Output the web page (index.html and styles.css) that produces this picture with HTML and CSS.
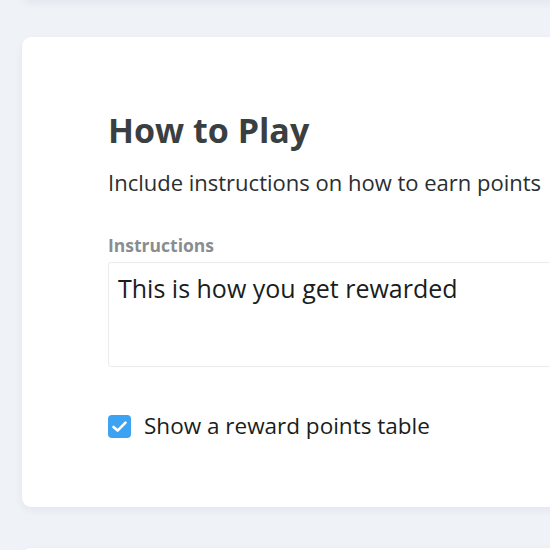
FILE: index.html
```html
<!DOCTYPE html>
<html>
<head>
<meta charset="utf-8">
<link rel="stylesheet" href="styles.css">
</head>
<body>
<div class="page">
  <div class="card card-prev"></div>
  <section class="card">
    <h1 class="title">How to Play</h1>
    <p class="subtitle">Include instructions on how to earn points</p>
    <label class="field-label">Instructions</label>
    <div class="textarea">This is how you get rewarded</div>
    <div class="check-row">
      <span class="checkbox">
        <svg width="17" height="17" viewBox="0 0 17 17"><path d="M2.5 9 L6.6 12.6 L14.5 4.6" fill="none" stroke="#fff" stroke-width="2.6" stroke-linecap="round" stroke-linejoin="round"/></svg>
      </span>
      <span class="check-label">Show a reward points table</span>
    </div>
  </section>
  <div class="card card-next"></div>
</div>
</body>
</html>
```
FILE: styles.css
```css
html, body {
  margin: 0;
  padding: 0;
  background: #eff2f7;
  overflow: hidden;
  height: 550px;
}
body {
  font-family: "Open Sans", "Noto Sans", sans-serif;
  color: #1f2326;
}
.page {
  display: flex;
  flex-direction: column;
  gap: 37px;
  padding-left: 22px;
  width: 528px;
  overflow: hidden;
}
.card {
  background: #fff;
  border-radius: 9px 0 0 9px;
  box-shadow: 0 3px 8px rgba(30, 40, 60, 0.06);
  box-sizing: border-box;
  width: 560px;
  flex-shrink: 0;
}
.card-prev {
  height: 100px;
  margin-top: -100px;
}
.card-next {
  height: 100px;
  margin-top: 4px;
}
section.card {
  height: 470px;
  padding: 73px 0 0 86px;
}
.title {
  margin: 0;
  font-size: 34px;
  font-weight: 700;
  color: #3a3f42;
  line-height: 40px;
}
.subtitle {
  margin: 18px 0 0 0;
  font-size: 22px;
  line-height: 28px;
  color: #2a2e31;
}
.field-label {
  display: block;
  margin-top: 39px;
  font-size: 17.5px;
  font-weight: 700;
  color: #8a8d90;
  line-height: 20px;
}
.textarea {
  margin-top: 7px;
  box-sizing: border-box;
  height: 105px;
  border: 1px solid #ececec;
  border-radius: 3px;
  padding: 10px 9px;
  font-size: 25px;
  line-height: 30px;
  color: #1a1d20;
}
.check-row {
  display: flex;
  align-items: center;
  gap: 13px;
  margin-top: 46px;
}
.checkbox {
  width: 23px;
  height: 23px;
  border-radius: 4px;
  background: #3ba3f1;
  display: flex;
  align-items: center;
  justify-content: center;
  flex-shrink: 0;
}
.check-label {
  font-size: 22.5px;
  line-height: 26px;
  color: #1a1d20;
}
```
